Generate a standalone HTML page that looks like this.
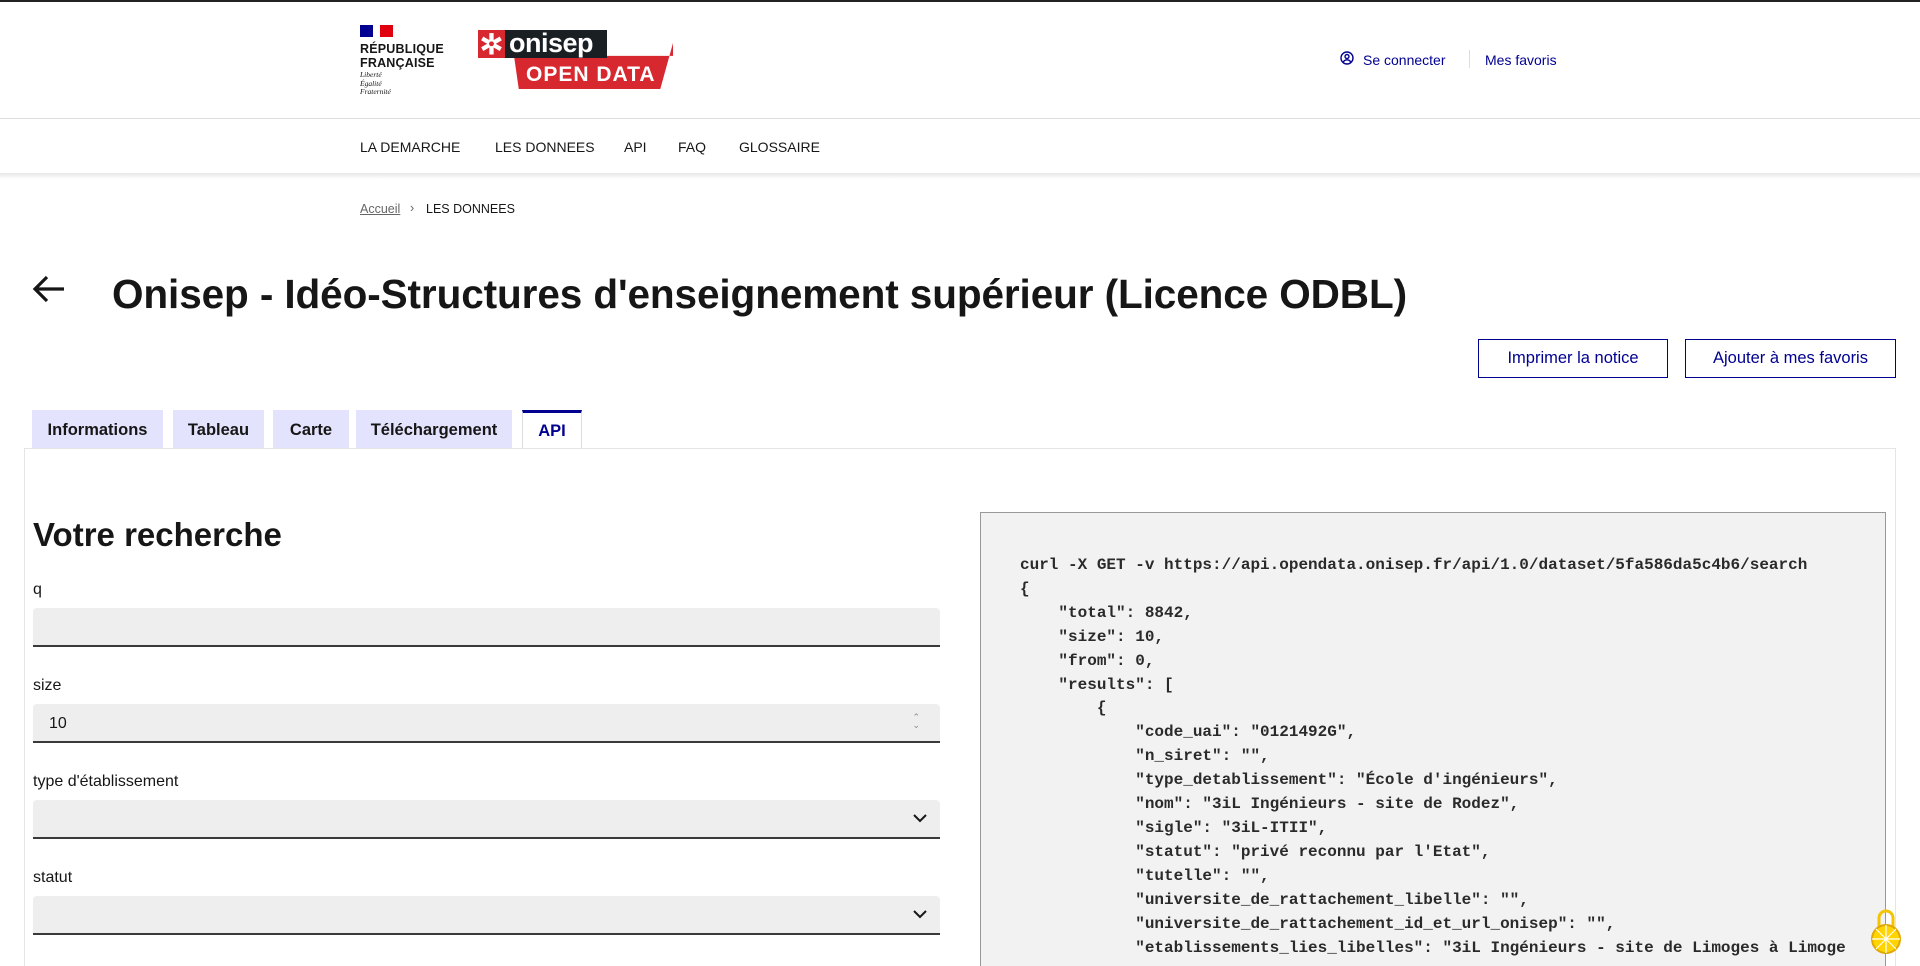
<!DOCTYPE html>
<html style="width:1920px;height:966px;overflow:hidden"><head><meta charset="utf-8">
<style>
*{margin:0;padding:0;box-sizing:border-box}
body{width:1920px;height:966px;overflow:hidden;background:#fff;font-family:"Liberation Sans",sans-serif;color:#161616;position:relative}
.abs{position:absolute}
.topline{top:0;left:0;width:1920px;height:2px;background:#222}
.hdrline{top:118px;left:0;width:1920px;height:1px;background:#ddd}
.navshadow{top:173px;left:0;width:1920px;height:6px;background:linear-gradient(#e6e6e6,#fff)}
.nav a{position:absolute;top:139px;font-size:14px;color:#161616;text-decoration:none}
.tab{position:absolute;top:410px;height:38px;background:#e3e3fd;font-weight:bold;font-size:16.5px;text-align:center;line-height:40px;color:#161616}
.lbl{position:absolute;left:33px;font-size:16px}
.inp{position:absolute;left:33px;width:907px;height:39px;background:#eee;border-bottom:2px solid #3a3a3a;border-radius:4px 4px 0 0}
.code{position:absolute;left:980px;top:512px;width:906px;height:454px;background:#f2f2f2;border:1px solid #999;border-bottom:none;overflow:hidden}
.code pre{position:absolute;left:39px;top:41px;font-family:"Liberation Mono",monospace;font-size:16px;line-height:23.9px;color:#2a2a2a;font-weight:bold}
.btn{position:absolute;top:338px;height:39px;border:1px solid #000091;color:#000091;font-size:16.5px;text-align:center;line-height:37px}
</style></head><body>
<div class="abs topline"></div>
<div class="abs" style="left:360px;top:25px;width:33px;height:12px;display:flex">
<div style="width:13px;background:#000091"></div><div style="width:7px;background:#fff"></div><div style="width:13px;background:#e1000f"></div></div>
<div class="abs" style="left:360px;top:42px;font-weight:bold;font-size:12.5px;line-height:14px;letter-spacing:.2px">RÉPUBLIQUE<br>FRANÇAISE</div>
<div class="abs" style="left:360px;top:71px;font-family:'Liberation Serif',serif;font-style:italic;font-size:7.5px;line-height:8.5px">Liberté<br>Égalité<br>Fraternité</div>
<div class="abs" style="left:514px;top:43px;width:159px;height:46px;background:#d7282f;clip-path:polygon(0 28%,100% 28%,100% 0,92% 100%,3% 100%);"></div>
<div class="abs" style="left:478px;top:30px;width:27px;height:28px;background:#d7282f;color:#fff;font-size:28px;line-height:30px;text-align:center;font-weight:bold">✲</div>
<div class="abs" style="left:505px;top:30px;width:102px;height:28px;background:#1a1f24;color:#fff;font-size:27px;line-height:26px;font-weight:bold;padding-left:4px;letter-spacing:-.5px">onisep</div>
<div class="abs" style="left:526px;top:63px;color:#fff;font-size:21px;font-weight:bold;letter-spacing:1px">OPEN DATA</div>
<svg class="abs" style="left:1340px;top:51px" width="14" height="14" viewBox="0 0 14 14"><circle cx="7" cy="7" r="6" fill="none" stroke="#000091" stroke-width="1.4"/><circle cx="7" cy="5.5" r="2" fill="none" stroke="#000091" stroke-width="1.4"/><path d="M3.3 11c1-1.6 2.2-2.2 3.7-2.2s2.7.6 3.7 2.2" fill="none" stroke="#000091" stroke-width="1.4"/></svg>
<div class="abs" style="left:1363px;top:52px;font-size:14px;color:#000091">Se connecter</div>
<div class="abs" style="left:1469px;top:50px;width:1px;height:18px;background:#ddd"></div>
<div class="abs" style="left:1485px;top:52px;font-size:14px;color:#000091">Mes favoris</div>
<div class="abs hdrline"></div>
<div class="nav">
<a style="left:360px">LA DEMARCHE</a><a style="left:495px">LES DONNEES</a><a style="left:624px">API</a><a style="left:678px">FAQ</a><a style="left:739px">GLOSSAIRE</a>
</div>
<div class="abs navshadow"></div>
<div class="abs" style="left:360px;top:202px;font-size:12.5px;color:#666;text-decoration:underline">Accueil</div>
<div class="abs" style="left:410px;top:201px;font-size:12.5px;color:#666">›</div>
<div class="abs" style="left:426px;top:202px;font-size:12.5px;color:#161616">LES DONNEES</div>
<svg class="abs" style="left:32px;top:274px" width="34" height="30" viewBox="0 0 34 30"><path d="M32 15H4M15 3L3 15l12 12" fill="none" stroke="#161616" stroke-width="3.2"/></svg>
<div class="abs" style="left:112px;top:271px;font-size:40.5px;font-weight:bold;letter-spacing:-.1px">Onisep - Idéo-Structures d'enseignement supérieur (Licence ODBL)</div>
<div class="btn" style="left:1478px;width:190px;top:339px">Imprimer la notice</div>
<div class="btn" style="left:1685px;width:211px;top:339px">Ajouter à mes favoris</div>
<div class="tab" style="left:32px;width:131px">Informations</div>
<div class="tab" style="left:173px;width:91px">Tableau</div>
<div class="tab" style="left:273px;width:76px">Carte</div>
<div class="tab" style="left:356px;width:156px">Téléchargement</div>
<div class="tab" style="left:522px;width:60px;background:#fff;color:#000091;border:1px solid #ddd;border-top:3px solid #000091;border-bottom:none;line-height:36px;height:39px">API</div>
<div class="abs" style="left:24px;top:448px;width:1872px;height:1px;background:#e5e5e5"></div>
<div class="abs" style="left:24px;top:448px;width:1px;height:518px;background:#e5e5e5"></div>
<div class="abs" style="left:1895px;top:448px;width:1px;height:518px;background:#e5e5e5"></div>
<div class="abs" style="left:33px;top:516px;font-size:33px;font-weight:bold">Votre recherche</div>
<div class="lbl" style="top:581px">q</div>
<div class="inp" style="top:608px"></div>
<div class="lbl" style="top:677px">size</div>
<div class="inp" style="top:704px"><span style="position:absolute;left:16px;top:11px;font-size:16px">10</span><span style="position:absolute;right:20px;top:9px;font-size:9px;color:#888;line-height:8px">⌃<br>⌄</span></div>
<div class="lbl" style="top:773px">type d'établissement</div>
<div class="inp" style="top:800px"><svg style="position:absolute;right:13px;top:14px" width="14" height="9" viewBox="0 0 14 9"><path d="M1 1l6 6 6-6" fill="none" stroke="#161616" stroke-width="2"/></svg></div>
<div class="lbl" style="top:869px">statut</div>
<div class="inp" style="top:896px"><svg style="position:absolute;right:13px;top:14px" width="14" height="9" viewBox="0 0 14 9"><path d="M1 1l6 6 6-6" fill="none" stroke="#161616" stroke-width="2"/></svg></div>
<div class="code"><pre>curl -X GET -v https://api.opendata.onisep.fr/api/1.0/dataset/5fa586da5c4b6/search
{
    "total": 8842,
    "size": 10,
    "from": 0,
    "results": [
        {
            "code_uai": "0121492G",
            "n_siret": "",
            "type_detablissement": "École d'ingénieurs",
            "nom": "3iL Ingénieurs - site de Rodez",
            "sigle": "3iL-ITII",
            "statut": "privé reconnu par l'Etat",
            "tutelle": "",
            "universite_de_rattachement_libelle": "",
            "universite_de_rattachement_id_et_url_onisep": "",
            "etablissements_lies_libelles": "3iL Ingénieurs - site de Limoges à Limoge</pre></div>
<svg class="abs" style="left:1870px;top:906px" width="32" height="50" viewBox="0 0 32 50"><path d="M9 22V12a7 7 0 0 1 14 0v10" fill="none" stroke="#f5c400" stroke-width="3"/><circle cx="16" cy="33" r="14" fill="#ffd400" stroke="#e0a800" stroke-width="2"/><path d="M16 19v28M2 33h28M6 23l20 20M26 23L6 43" stroke="#fff" stroke-width="1.2"/></svg>
</body></html>
